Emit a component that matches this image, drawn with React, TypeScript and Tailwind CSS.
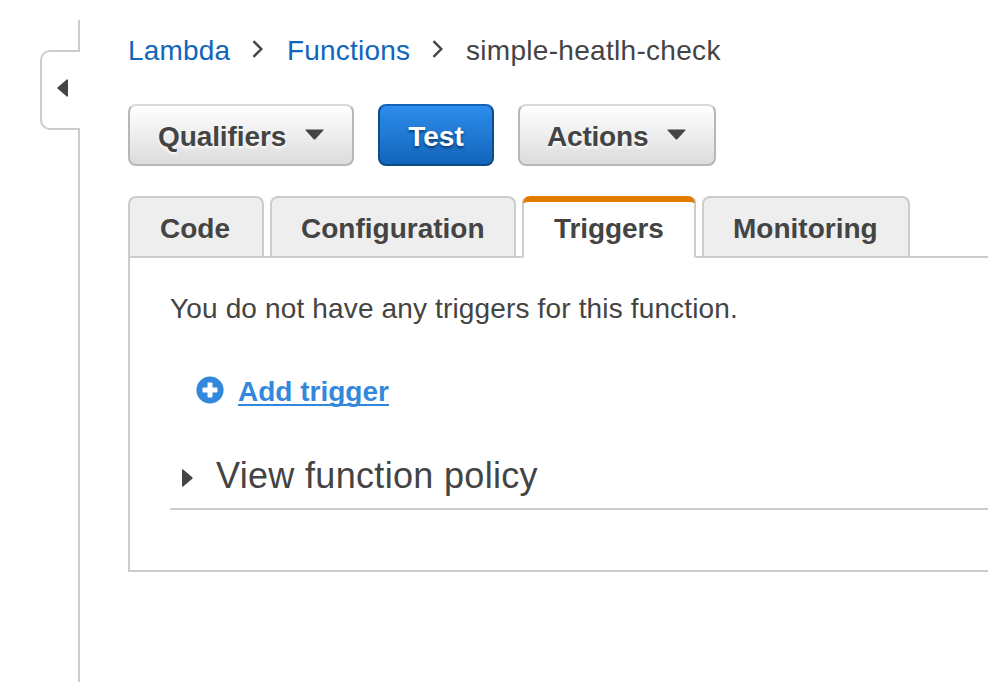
import type { ReactNode } from "react";

function Separator({ className }: { className: string }) {
  return (
    <svg className={`-mt-1 h-[18px] w-3 shrink-0 ${className}`} viewBox="0 0 12 18" fill="none" stroke="#444" strokeWidth="2.4">
      <path d="M1.5 1.2 L9.3 9 L1.5 16.8" />
    </svg>
  );
}

function DropdownButton({ label, className, labelClassName }: { label: string; className: string; labelClassName: string }) {
  return (
    <button
      className={`flex h-[62px] items-center rounded-lg border-2 border-[#b7b7b7] border-t-[#dadada] bg-linear-to-b from-white to-[#dcdcdc] font-bold leading-8 [text-shadow:0_2px_3px_#fff] ${className}`}
    >
      <span className={`pt-[3px] ${labelClassName}`}>{label}</span>
      <svg className="mb-0.5 ml-[19px] h-[11px] w-[19px] shrink-0" viewBox="0 0 19 11" fill="#444">
        <path d="M1 0.5H18Q19 0.7 18.3 1.5L10.5 9.9Q9.5 10.9 8.5 9.9L0.7 1.5Q0 0.7 1 0.5Z" />
      </svg>
    </button>
  );
}

function Tab({ className, children }: { className: string; children: ReactNode }) {
  return (
    <div className={`h-[60px] rounded-t-lg border-2 border-b-0 border-[#ccc] bg-[#eee] pt-[15px] font-bold leading-8 ${className}`}>
      {children}
    </div>
  );
}

export default function App() {
  return (
    <div className="flex h-[682px] w-[988px] overflow-hidden bg-white font-['Liberation_Sans',Arial,sans-serif] text-[28px] whitespace-nowrap text-[#444]">
      <aside className="flex w-20 shrink-0 flex-col items-end pt-5">
        <div className="h-[30px] w-0.5 bg-[#ccc]" />
        <div className="flex h-20 w-10 items-center rounded-l-[10px] border-2 border-r-0 border-[#ccc] pl-[15px]">
          <svg className="-mt-1 h-[18px] w-[11px]" viewBox="0 0 11 18" fill="#444">
            <path d="M11 1V17Q10.7 18.2 9.8 17.6L0.7 9.8Q0 9 0.7 8.2L9.8 0.4Q10.7 -0.2 11 1Z" />
          </svg>
        </div>
        <div className="w-0.5 flex-1 bg-[#ccc]" />
      </aside>

      <main className="ml-12 flex min-w-0 flex-1 flex-col pt-[35px]">
        <nav className="flex h-8 items-center leading-8">
          <a className="w-[103px] tracking-[0.2px] text-[#1166bb]">Lambda</a>
          <Separator className="ml-[21px]" />
          <a className="ml-[23px] w-[122px] tracking-[0.2px] text-[#1166bb]">Functions</a>
          <Separator className="ml-[23px]" />
          <span className="ml-[22px] tracking-[0.3px]">simple-heatlh-check</span>
        </nav>

        <div className="mt-[37px] flex gap-6">
          <DropdownButton label="Qualifiers" className="w-[226px] pl-7" labelClassName="w-[128px] text-left tracking-[-0.1px]" />
          <button className="h-[62px] w-[116px] rounded-lg border-2 border-[#0d4a88] border-t-[#1263ba] bg-linear-to-b from-[#2e8ded] to-[#1166bb] pt-[3px] font-bold leading-8 text-white [text-shadow:0_2px_3px_#0a3768]">
            Test
          </button>
          <DropdownButton label="Actions" className="w-[198px] pl-[27px]" labelClassName="w-[101px] text-left tracking-[-0.2px]" />
        </div>

        <div className="mt-[30px] flex h-[62px] shrink-0">
          <div className="flex border-b-2 border-[#ccc]">
            <Tab className="w-[136px] pl-[30px]">Code</Tab>
            <Tab className="ml-1.5 w-[246px] pl-[29px]">Configuration</Tab>
            <div className="w-1.5" />
          </div>
          <div className="flex h-[62px] w-[174px] flex-col">
            <svg className="h-2 w-[174px]" viewBox="0 0 174 8">
              <path d="M0 8V5Q0 3 2 2V8ZM172 8V2Q174 3 174 5V8Z" fill="#ccc" />
              <path d="M1.5 6Q1.8 0 8 0H166Q172.2 0 172.5 6V7H171.5Q170.5 6 169 6H5Q3.5 6 2.5 7H1.5Z" fill="#e07b00" />
            </svg>
            <div className="flex-1 rounded-b-[2px] border-x-2 border-[#ccc] pt-[9px] pl-[30px] font-bold leading-8 tracking-[-0.1px]">
              Triggers
            </div>
          </div>
          <div className="flex flex-1 border-b-2 border-[#ccc]">
            <Tab className="ml-1.5 w-[208px] pl-[29px]">Monitoring</Tab>
          </div>
        </div>

        <section className="flex h-[314px] shrink-0 flex-col border-b-2 border-l-2 border-[#ccc] pt-[35px] pl-10">
          <p className="leading-8 tracking-[0.15px]">You do not have any triggers for this function.</p>
          <div className="mt-[51px] flex h-8 items-center leading-8">
            <svg className="-mt-1 ml-[26px] size-7" viewBox="0 0 28 28">
              <circle cx="14" cy="14" r="13.6" fill="#3388dd" />
              <rect x="6.5" y="11.5" width="15" height="5" rx="1" fill="#fff" />
              <rect x="11.5" y="6.5" width="5" height="15" rx="1" fill="#fff" />
            </svg>
            <a className="ml-[14px] h-7 border-b-2 border-[#3388dd] font-bold leading-7 text-[#3388dd]">Add trigger</a>
          </div>
          <h2 className="mt-10 flex h-[62px] items-center border-b-2 border-[#ccc] pb-1 pl-3 text-[36px] leading-10">
            <svg className="mt-1 h-[18px] w-[11px]" viewBox="0 0 11 18" fill="#444">
              <path d="M0 1V17Q0.3 18.2 1.2 17.6L10.3 9.8Q11 9 10.3 8.2L1.2 0.4Q0.3 -0.2 0 1Z" />
            </svg>
            <span className="ml-[23px] tracking-[0.32px]">View function policy</span>
          </h2>
        </section>
      </main>
    </div>
  );
}
